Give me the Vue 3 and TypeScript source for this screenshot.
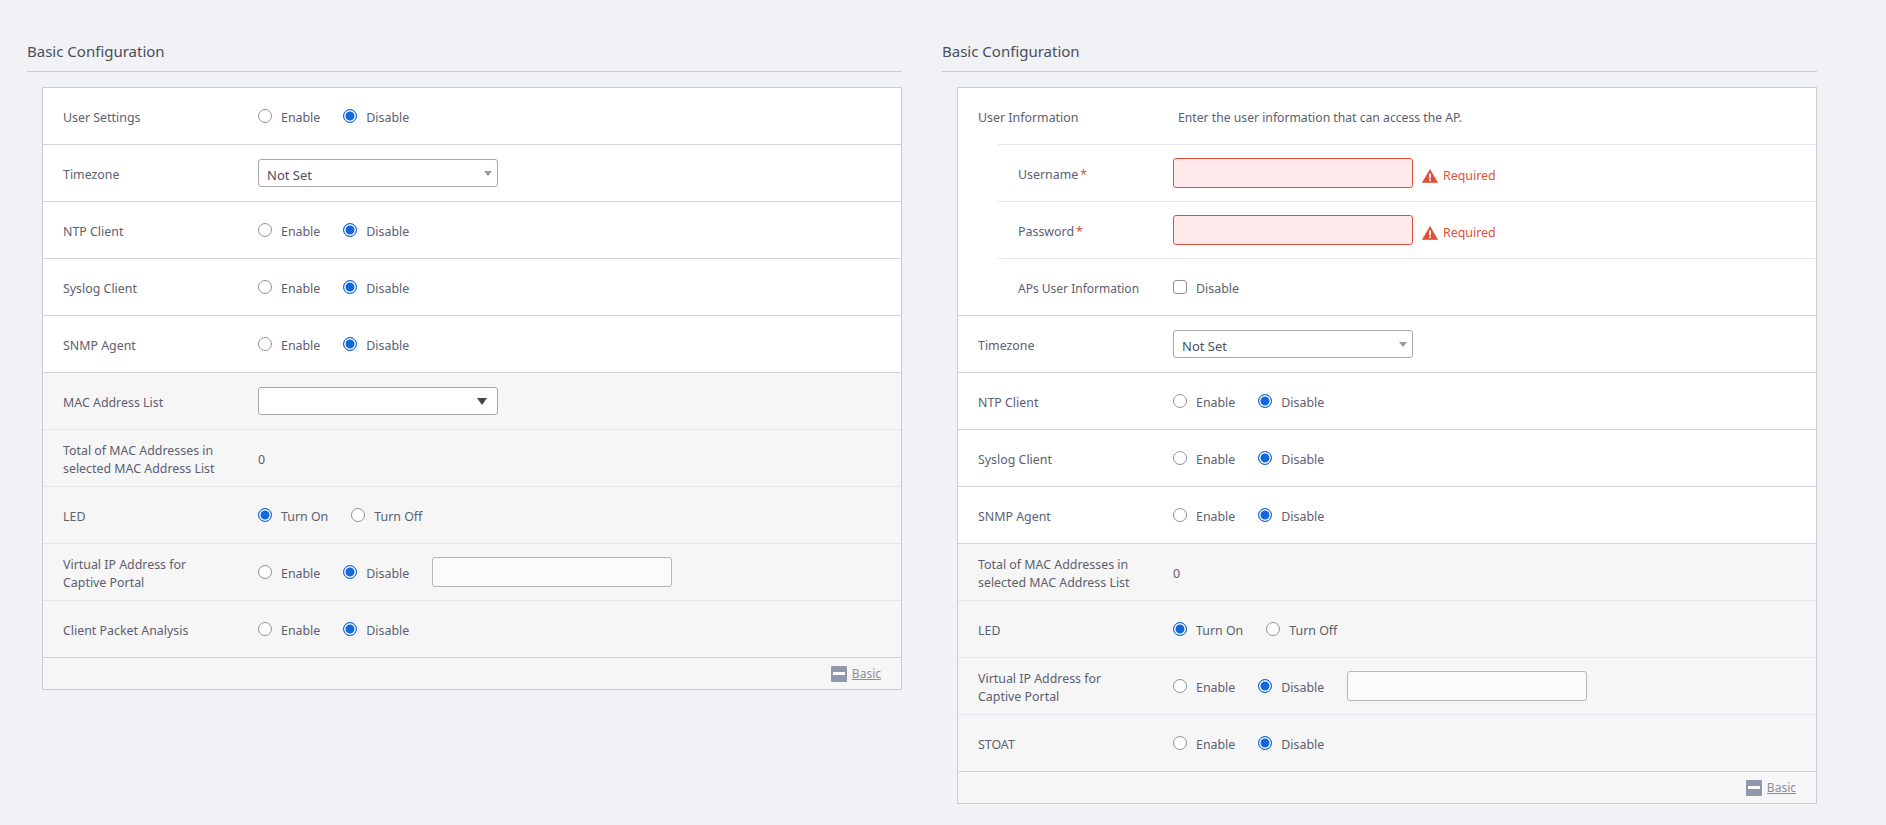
<template>
  <div class="page">
    <section v-for="panel in panels" :key="panel.id" class="column">
      <h2 class="heading">Basic Configuration</h2>
      <div class="card">
        <div
          v-for="row in panel.rows"
          :key="row.label"
          class="row"
          :class="{ shaded: row.shaded, sub: row.sub, nested: row.nested, 'sub-end': row.subEnd }"
        >
          <div class="label">
            {{ row.label }}<span v-if="row.required" class="star">*</span>
          </div>
          <div class="value">
            <template v-if="row.kind === 'radio'">
              <label v-for="(opt, i) in row.options" :key="opt" class="radio">
                <span class="dot" :class="{ on: row.selected === i }"></span>{{ opt }}
              </label>
              <input v-if="row.extra" class="text" type="text" />
            </template>
            <div v-else-if="row.kind === 'select'" class="select">
              Not Set<span class="caret small"></span>
            </div>
            <div v-else-if="row.kind === 'emptySelect'" class="select">
              <span class="caret"></span>
            </div>
            <template v-else-if="row.kind === 'required'">
              <input class="text invalid" type="text" />
              <span class="error">
                <svg width="16" height="14" viewBox="0 0 16 14">
                  <path d="M8 .5 15.6 13.5H.4z" fill="#e04f39" stroke="#e04f39" stroke-linejoin="round" stroke-width=".6" />
                  <rect x="7.1" y="4.6" width="1.8" height="4.8" fill="#fff" />
                  <rect x="7.1" y="10.3" width="1.8" height="1.8" fill="#fff" />
                </svg>
                Required
              </span>
            </template>
            <label v-else-if="row.kind === 'check'" class="radio">
              <span class="box"></span>Disable
            </label>
            <span v-else class="plain">{{ row.text }}</span>
          </div>
        </div>
        <div class="foot">
          <span class="minus"><span></span></span>
          <a class="basic">Basic</a>
        </div>
      </div>
    </section>
  </div>
</template>

<script setup lang="ts">
type Row = {
  label: string;
  kind: string;
  options?: string[];
  selected?: number;
  text?: string;
  extra?: boolean;
  shaded?: boolean;
  sub?: boolean;
  subEnd?: boolean;
  nested?: boolean;
  required?: boolean;
};

const onOff = ["Enable", "Disable"];
const radio = (label: string, shaded = false, extra = false): Row => ({
  label,
  kind: "radio",
  options: onOff,
  selected: 1,
  shaded,
  extra,
});

const macTotal: Row = {
  label: "Total of MAC Addresses in selected MAC Address List",
  kind: "text",
  text: "0",
  shaded: true,
};
const led: Row = {
  label: "LED",
  kind: "radio",
  options: ["Turn On", "Turn Off"],
  selected: 0,
  shaded: true,
};

const panels: { id: string; rows: Row[] }[] = [
  {
    id: "left",
    rows: [
      radio("User Settings"),
      { label: "Timezone", kind: "select" },
      radio("NTP Client"),
      radio("Syslog Client"),
      radio("SNMP Agent"),
      { label: "MAC Address List", kind: "emptySelect", shaded: true },
      macTotal,
      led,
      radio("Virtual IP Address for Captive Portal", true, true),
      radio("Client Packet Analysis", true),
    ],
  },
  {
    id: "right",
    rows: [
      {
        label: "User Information",
        kind: "text",
        text: "Enter the user information that can access the AP.",
        nested: true,
      },
      { label: "Username", kind: "required", sub: true, required: true },
      { label: "Password", kind: "required", sub: true, required: true },
      { label: "APs User Information", kind: "check", subEnd: true },
      { label: "Timezone", kind: "select" },
      radio("NTP Client"),
      radio("Syslog Client"),
      radio("SNMP Agent"),
      macTotal,
      led,
      radio("Virtual IP Address for Captive Portal", true, true),
      radio("STOAT", true),
    ],
  },
];
</script>

<style>
html,
body {
  margin: 0;
  background: #f0f2f6;
}
</style>

<style scoped>
.page {
  display: grid;
  grid-template-columns: 875px 875px;
  gap: 40px;
  padding: 40px 0 0 27px;
  font-family: "Noto Sans", "Liberation Sans", sans-serif;
  font-size: 12.4px;
  color: #5c6070;
}

.heading {
  margin: 0 0 15px;
  padding: 1px 0 9px;
  border-bottom: 1px solid #c8ccd2;
  font-size: 15px;
  font-weight: 400;
  line-height: 21px;
  color: #4a4f5a;
}

.card {
  margin-left: 15px;
  background: #fff;
  border: 1px solid #c8cbd0;
}

.row {
  display: flex;
  align-items: center;
  min-height: 56px;
  padding-left: 20px;
  border-bottom: 1px solid #d0d3d8;
}

.row.shaded {
  background: #f6f6f6;
  border-bottom-color: #e4e8ee;
}

.row:nth-last-child(2) {
  border-bottom-color: #d0d3d8;
}

.row.nested,
.row.sub {
  margin-left: 40px;
  border-bottom-color: #e4e8ee;
}

.row.nested {
  padding-left: 0;
}

.label {
  flex: 0 0 195px;
  box-sizing: border-box;
  padding: 3px 30px 0 0;
  line-height: 18px;
}

.row.nested .label {
  margin-left: -20px;
}

.row.nested .plain {
  padding-left: 5px;
  font-size: 12.2px;
}

.row.sub .label {
  flex-basis: 155px;
  padding-right: 0;
}

.row.sub-end {
  padding-left: 60px;
}

.row.sub-end .label {
  flex-basis: 155px;
  padding-right: 0;
  font-size: 12px;
}

.star {
  color: #e04f39;
  margin-left: 2px;
}

.value {
  display: flex;
  align-items: center;
}

.plain {
  padding-top: 2px;
}

.radio {
  display: flex;
  align-items: center;
  margin-right: 23px;
  padding-top: 2px;
}

.dot {
  box-sizing: border-box;
  width: 14px;
  height: 14px;
  margin: -2px 9px 0 0;
  border: 1px solid #8f92a0;
  border-radius: 50%;
  background: #fff;
}

.dot.on {
  border: 1.5px solid #1467d8;
  box-shadow: inset 0 0 0 1.5px #fff;
  background: #1467d8;
}

.box {
  box-sizing: border-box;
  width: 14px;
  height: 14px;
  margin: -2px 9px 0 0;
  border: 1px solid #8f92a0;
  border-radius: 3px;
  background: #fff;
}

.select {
  position: relative;
  box-sizing: border-box;
  width: 240px;
  height: 28px;
  padding-left: 8px;
  border: 1px solid #a5a8ad;
  border-radius: 3px;
  background: #fff;
  font-size: 13px;
  line-height: 30px;
  color: #4c505c;
}

.caret {
  position: absolute;
  right: 10px;
  top: 10px;
  border-style: solid;
  border-width: 7px 5px 0;
  border-color: #444 transparent transparent;
}

.caret.small {
  top: 11px;
  right: 5px;
  border-width: 5px 4px 0;
  border-color: #999 transparent transparent;
}

.text {
  box-sizing: border-box;
  width: 240px;
  height: 30px;
  padding: 0 8px;
  border: 1px solid #b5b7bb;
  border-radius: 3px;
  background: #fbfbfb;
}

.text.invalid {
  border-color: #e04f39;
  background: #ffe9ea;
}

.error {
  display: flex;
  align-items: center;
  gap: 5px;
  margin-left: 9px;
  padding-top: 5px;
  color: #e04f39;
}

.foot {
  display: flex;
  align-items: center;
  justify-content: flex-end;
  gap: 5px;
  height: 31px;
  padding-right: 20px;
  background: #f6f6f6;
}

.minus {
  display: flex;
  align-items: center;
  justify-content: center;
  width: 16px;
  height: 16px;
  border-radius: 1px;
  background: #8f97ac;
}

.minus span {
  width: 12px;
  height: 3px;
  background: #fff;
}

.basic {
  font-size: 12px;
  color: #8a8f9c;
  text-decoration: underline;
}
</style>
